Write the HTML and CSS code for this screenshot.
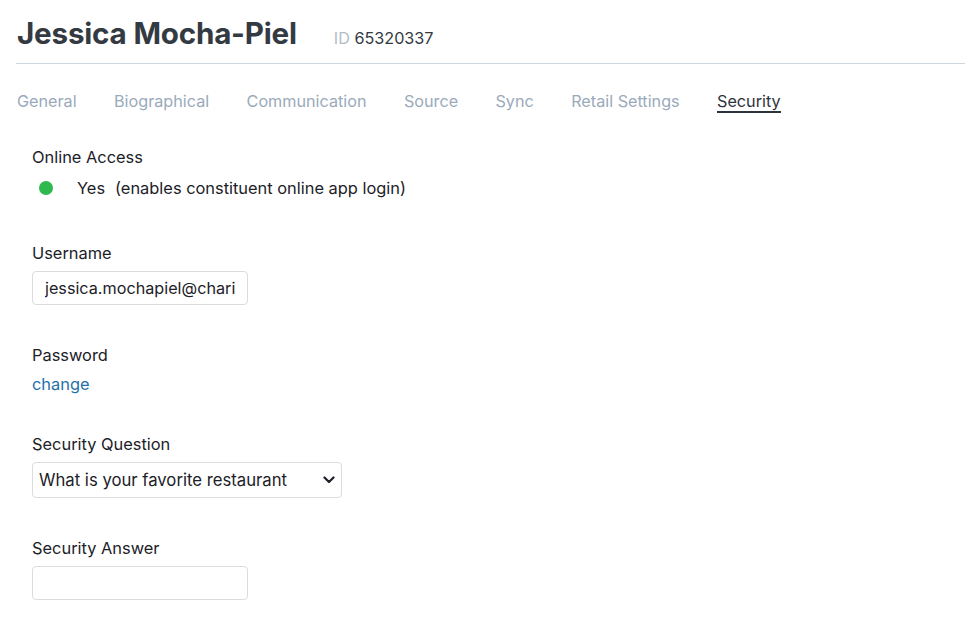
FILE: index.html
```html
<!DOCTYPE html>
<html lang="en">
<head>
  <meta charset="UTF-8" />
  <title>Constituent Security</title>
  <link rel="stylesheet" href="styles.css">
</head>
<body>

  <div class="header">
    <h1>Jessica Mocha-Piel</h1>
    <span class="record-id"><span class="id-label">ID</span> 65320337</span>
  </div>

  <nav class="tabs">
    <a href="#">General</a>
    <a href="#">Biographical</a>
    <a href="#">Communication</a>
    <a href="#">Source</a>
    <a href="#">Sync</a>
    <a href="#">Retail Settings</a>
    <a href="#" class="active">Security</a>
  </nav>

  <div class="security-form">
    <div class="field">
      <label>Online Access</label>
      <div class="access-row">
        <span class="dot"></span>
        <span class="yes">Yes</span>
        <span>(enables constituent online app login)</span>
      </div>
    </div>

    <div class="field">
      <label for="username">Username</label>
      <input type="text" id="username" class="text-input" value="jessica.mochapiel@charityorg.com" />
    </div>

    <div class="field">
      <label>Password</label>
      <a href="#" class="change-link">change</a>
    </div>

    <div class="field">
      <label for="question">Security Question</label>
      <div class="select-wrap">
        <select id="question" class="select-input">
          <option>What is your favorite restaurant</option>
          <option>What was the name of your first pet</option>
          <option>What city were you born in</option>
        </select>
        <svg class="chevron" width="12" height="8" viewBox="0 0 12 8"><path d="M1.5 1.5 L6 6 L10.5 1.5" fill="none" stroke="#1c2128" stroke-width="2.2" stroke-linecap="round" stroke-linejoin="round"/></svg>
      </div>
    </div>

    <div class="field">
      <label for="answer">Security Answer</label>
      <input type="text" id="answer" class="text-input" />
    </div>
  </div>

</body>
</html>
```

FILE: styles.css
```css
body { margin: 0; padding: 0 0 0 16px; font-family: Inter, "Noto Sans", sans-serif; color: #1c2128; background: #fff; }

.header { display: flex; align-items: baseline; gap: 37px; height: 64px; border-bottom: 1px solid #cfd7de; padding-left: 1px; box-sizing: border-box; }
.header h1 { margin: 0; font-size: 29.6px; font-weight: 700; color: #343a42; letter-spacing: -0.2px; line-height: 66px; }
.record-id { font-size: 16.2px; color: #343a42; }
.id-label { color: #b4bcc4; }

.tabs { display: flex; gap: 37.4px; padding: 27px 0 0 1px; }
.tabs a { font-size: 16.2px; line-height: 20px; color: #9aaabb; text-decoration: none; border-bottom: 2px solid transparent; }
.tabs a.active { color: #2d333a; border-bottom-color: #2d333a; }

.security-form { padding: 34px 0 0 16px; font-size: 16.4px; }
.field { display: flex; flex-direction: column; align-items: flex-start; margin-bottom: 40px; }
.field:first-child { margin-bottom: 45px; }
.field label { line-height: 20px; margin-bottom: 8px; }

.access-row { display: flex; align-items: center; line-height: 20px; margin-top: 3px; }
.dot { width: 14px; height: 14px; border-radius: 50%; background: #2eb84e; margin: 0 24px 0 7px; }
.yes { margin-right: 10px; }

.text-input { width: 216px; height: 34px; box-sizing: border-box; border: 1px solid #dcdcdc; border-radius: 4px; padding: 0 12px; font-family: inherit; font-size: 16.2px; color: #1c2128; }

.select-wrap { position: relative; }
.select-input { appearance: none; -webkit-appearance: none; width: 310px; height: 36px; box-sizing: border-box; border: 1px solid #dcdcdc; border-radius: 4px; padding: 0 30px 0 6px; font-family: inherit; font-size: 16.7px; color: #1c2128; background: #fff; }
.chevron { position: absolute; right: 7px; top: 14px; pointer-events: none; }

.change-link { line-height: 20px; margin-top: 1px; color: #1f6fa8; text-decoration: none; }
```
